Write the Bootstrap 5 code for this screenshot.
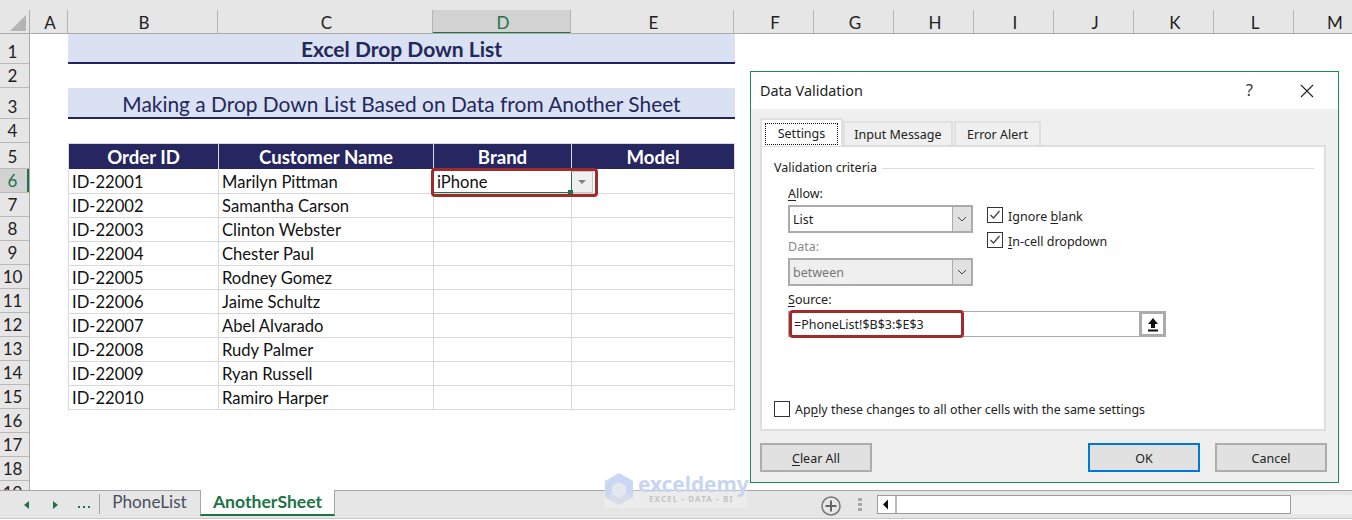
<!DOCTYPE html>
<html lang="en">
<head>
<meta charset="utf-8">
<title>Data Validation</title>
<link href="https://cdn.jsdelivr.net/npm/bootstrap@5.3.0/dist/css/bootstrap.min.css" rel="stylesheet">
<style>
html,body{margin:0;height:520px;overflow:hidden;background:#fff}
body{font-family:"Lato","Liberation Sans",sans-serif;color:#111}
.xl-app{width:1352px;height:520px;position:relative;overflow:hidden}
.xl-strip{height:10px;background:#e6e6e6}
.xl-colhead{height:24px;background:#e6e6e6;border-bottom:1px solid #ababab;width:1352px;overflow:hidden}
.xl-corner{width:30px;flex:none;border-right:1px solid #ababab;position:relative}
.xl-corner svg{display:block;margin:5px 0 0 10px}
.xl-col{font-size:17px;line-height:25px;text-align:center;border-right:1px solid #b4b4b4;color:#222;flex:none;height:23px;padding-left:3px}
.xl-col-sel{background:#d2d2d2;color:#217346;border-bottom:2px solid #217346;height:24px}
.xl-main{height:456px;overflow:hidden}
.xl-rows{width:30px;flex:none;background:#e6e6e6;border-right:1px solid #ababab}
.xl-row{font-size:17px;line-height:22px;text-align:center;border-bottom:1px solid #b9b9b9;color:#222;display:flex;align-items:flex-end;justify-content:center;padding-right:4px}
.xl-row-sel{background:#d2d2d2;color:#217346;box-shadow:inset -2px 0 0 #217346}
.xl-cells{width:705px;padding-left:38px;flex:none}
.xl-band{background:#d9e1f2;border-bottom:2px solid #22255e;color:#24285b;text-align:center}
.xl-band-a{height:30px;font-size:21px;font-weight:700;line-height:30px;margin-bottom:24px}
.xl-band-b{height:31px;font-size:20.9px;line-height:32px;margin-bottom:24px}
.xl-table{width:666px;table-layout:fixed;border-collapse:collapse;margin:0;--bs-table-border-color:#d9d9d9}
.xl-table th,.xl-table td{padding:1px 3px 0;border:1px solid #d9d9d9;font-size:16.6px;height:24px;line-height:22px;color:#111;box-shadow:none;vertical-align:top}
.xl-table thead th{background:#262660;color:#fff;font-weight:700;font-size:18.6px;text-align:center;height:26px;padding:1px 3px 0;line-height:24px;border-color:#d9d9d9;border-bottom-color:#fff}
.xl-bar{height:29px;background:#e6e6e6;border-top:1px solid #a6a6a6;border-bottom:1px solid #c8c8c8;position:relative}
.xl-nav{width:100px;flex:none;border-right:1px solid #a6a6a6;height:20px;margin-top:3px;color:#217346;position:relative}
.xl-tab{font-size:17.2px;height:26px;line-height:22px;color:#4a5060;flex:none}
.xl-tab-a{width:99px;text-align:center}
.xl-tab-b{width:135px;margin-left:1px;text-align:center;background:#fff;color:#217346;font-size:17.6px;font-weight:700;border-left:1px solid #a6a6a6;border-right:1px solid #a6a6a6;border-bottom:2px solid #217346;margin-top:-1px;height:26px;line-height:24px}
.xl-scroll{position:absolute;left:877px;top:4px;width:475px;height:19px;background:#f1f1f1}
.xl-scroll-in{width:414px;height:19px;background:#fff;border:1px solid #9b9b9b;flex:none}
.xl-scroll-btn{width:19px;border-right:2px solid #b9b9b9;height:17px}
.xl-plus{position:absolute;left:821px;top:5px}
.xl-dots{position:absolute;left:858px;top:7px;width:4px;height:14px}
.xl-dots i{display:block;width:4px;height:3px;background:#a6a6a6;margin-bottom:2px}
.xl-red{position:absolute;border:3px solid #a02b2b;border-radius:4px;pointer-events:none}
.xl-red-a{left:431px;top:168px;width:167px;height:29px}
.xl-dd{position:absolute;left:571px;top:171px;width:22px;height:22px;background:#f0f0f0;border:1px solid #c4c4c4;border-left:1px solid #217346}
.xl-dd svg{display:block;margin:8px 0 0 6px}
.xl-handle{position:absolute;left:568px;top:190px;width:5px;height:4px;background:#217346}
.xl-cellline{position:absolute;left:434px;top:192px;width:137px;height:1px;background:#217346}
.xl-dlg{position:absolute;left:750px;top:71px;width:589px;height:412px;border:1px solid #218b4f;background:#efefef;font-family:"Noto Sans","Open Sans",sans-serif;font-size:12.5px;color:#222}
.xl-dlg u{text-underline-offset:2px}
.xl-dlg-title{height:37px;background:#fff;font-size:14.4px;padding-left:9px;flex:none}
.xl-dlg-help{position:absolute;left:495px;top:8px;font-size:16px;line-height:20px;color:#333}
.xl-dlg-x{position:absolute;left:549px;top:12px}
.xl-tabs{margin:9px 0 0 9px;height:27px;border:0;flex:none}
.xl-t{height:24px;margin-top:3px;background:#efefef;border:2px solid #e0e0e0;border-bottom:0;line-height:23px;text-align:center;flex:none}
.xl-t-a{width:83px;height:28px;margin-top:0;background:#fff;padding:3px 3px 0;position:relative;z-index:1}
.xl-t-a span{display:block;border:1px dotted #111;height:22px;line-height:20px}
.xl-t-b{width:110px;margin-left:0}
.xl-t-c{width:87px;margin-left:1px}
.xl-panel{height:286px;margin:0 12px 0 9px;background:#fff;border:2px solid #dedede;padding:11px 10px 0 12px;flex:none;color:#222}
.xl-legend{height:20px;line-height:18px}
.xl-legend i{flex:1;height:1px;background:#dcdcdc;margin-left:5px}
.xl-lbl{line-height:20px;height:18px;margin-left:14px;margin-top:4px}
.xl-lbl-allow{margin-top:6px}
.xl-lbl-data{margin-left:0}
.xl-lbl-off{color:#8a8a8a}
.xl-crit{margin:3px 0 0 14px}
.xl-sel{width:185px;height:28px;border:2px solid #ababab;background:#fff;padding-left:3px;line-height:26px}
.xl-sel b{font-weight:400;flex:1}
.xl-sel span{width:19px;height:24px;background:#e1e1e1;border-left:1px solid #ababab;display:flex;align-items:center;justify-content:center}
.xl-sel-off{background:#efefef;color:#777;margin-top:3px}
.xl-check{width:16px;height:16px;border:1px solid #333;background:#fff;flex:none;display:block}
.xl-check svg{display:block}
.xl-checks{margin:2px 0 0 14px}
.xl-ck-row{height:16px;margin-bottom:9px}
.xl-ck-txt{margin-left:5px;padding-top:3px;line-height:18px}
.xl-apply .xl-ck-txt{padding-top:1px}
.xl-src{width:378px;height:26px;border:1px solid #ababab;background:#fff;padding-left:5px;line-height:26px;position:relative;margin:3px 0 0 14px}
.xl-src em{font-style:normal;flex:1}
.xl-upbtn{width:27px;height:26px;margin:-1px -1px 0 0;border:3px solid #ababab;background:#fff;display:flex;align-items:center;justify-content:center}
.xl-red-b{left:0;top:-2px;width:175px;height:28px}
.xl-apply{margin-top:64px;height:16px;font-size:12.4px}
.xl-btns{padding-left:9px;margin-top:12px}
.xl-btn{width:112px;height:29px;padding:0;background:#e1e1e1;border:2px solid #adadad;border-radius:0;font-size:12.5px;color:#222;line-height:27px}
.xl-btn-ok{border-color:#0078d7;margin-left:216px}
.xl-btn-cancel{margin-left:15px}
.xl-wm{position:absolute;left:604px;top:472px;width:144px;height:36px;pointer-events:none}
.xl-wm-bg{position:absolute;left:0;top:18px;width:143px;height:18px;background:rgba(255,255,255,.25)}
.xl-wm-t{position:absolute;left:34px;top:3px;font-size:20.8px;line-height:19px;font-weight:700;color:#c7d5f2;font-family:"Noto Sans",sans-serif}
.xl-wm-s{position:absolute;left:45px;top:22px;font-size:8px;line-height:9px;font-weight:700;letter-spacing:1.1px;color:#c4c4c4;font-family:"Noto Sans",sans-serif;white-space:nowrap}
.xl-wm svg{position:absolute;left:0;top:0}
</style>
</head>
<body>
<div class="xl-app">
  <div class="xl-strip"></div>
  <div class="xl-colhead d-flex">
    <div class="xl-corner"><svg width="17" height="16"><polygon points="0,16 16,16 16,0" fill="#b4b4b4"/></svg></div>
    <div class="xl-col" style="width:38px">A</div>
    <div class="xl-col" style="width:150px">B</div>
    <div class="xl-col" style="width:215px">C</div>
    <div class="xl-col xl-col-sel" style="width:138px">D</div>
    <div class="xl-col" style="width:163px">E</div>
    <div class="xl-col" style="width:80px">F</div>
    <div class="xl-col" style="width:80px">G</div>
    <div class="xl-col" style="width:80px">H</div>
    <div class="xl-col" style="width:80px">I</div>
    <div class="xl-col" style="width:80px">J</div>
    <div class="xl-col" style="width:80px">K</div>
    <div class="xl-col" style="width:80px">L</div>
    <div class="xl-col" style="width:80px">M</div>
  </div>
  <div class="xl-main d-flex">
    <div class="xl-rows">
      <div class="xl-row" style="height:30px">1</div>
      <div class="xl-row" style="height:24px">2</div>
      <div class="xl-row" style="height:31px">3</div>
      <div class="xl-row" style="height:24px">4</div>
      <div class="xl-row" style="height:26px">5</div>
      <div class="xl-row xl-row-sel" style="height:24px">6</div>
      <div class="xl-row" style="height:24px">7</div>
      <div class="xl-row" style="height:24px">8</div>
      <div class="xl-row" style="height:24px">9</div>
      <div class="xl-row" style="height:24px">10</div>
      <div class="xl-row" style="height:24px">11</div>
      <div class="xl-row" style="height:24px">12</div>
      <div class="xl-row" style="height:24px">13</div>
      <div class="xl-row" style="height:24px">14</div>
      <div class="xl-row" style="height:24px">15</div>
      <div class="xl-row" style="height:24px">16</div>
      <div class="xl-row" style="height:24px">17</div>
      <div class="xl-row" style="height:24px">18</div>
      <div class="xl-row" style="height:24px">19</div>
    </div>
    <div class="xl-cells">
      <div class="xl-band xl-band-a">Excel Drop Down List</div>
      <div class="xl-band xl-band-b">Making a Drop Down List Based on Data from Another Sheet</div>
      <table class="table xl-table">
        <colgroup><col style="width:150px"><col style="width:215px"><col style="width:138px"><col style="width:163px"></colgroup>
        <thead><tr><th>Order ID</th><th>Customer Name</th><th>Brand</th><th>Model</th></tr></thead>
        <tbody>
          <tr><td>ID-22001</td><td>Marilyn Pittman</td><td>iPhone</td><td></td></tr>
          <tr><td>ID-22002</td><td>Samantha Carson</td><td></td><td></td></tr>
          <tr><td>ID-22003</td><td>Clinton Webster</td><td></td><td></td></tr>
          <tr><td>ID-22004</td><td>Chester Paul</td><td></td><td></td></tr>
          <tr><td>ID-22005</td><td>Rodney Gomez</td><td></td><td></td></tr>
          <tr><td>ID-22006</td><td>Jaime Schultz</td><td></td><td></td></tr>
          <tr><td>ID-22007</td><td>Abel Alvarado</td><td></td><td></td></tr>
          <tr><td>ID-22008</td><td>Rudy Palmer</td><td></td><td></td></tr>
          <tr><td>ID-22009</td><td>Ryan Russell</td><td></td><td></td></tr>
          <tr><td>ID-22010</td><td>Ramiro Harper</td><td></td><td></td></tr>
        </tbody>
      </table>
    </div>
  </div>
  <div class="xl-bar d-flex">
    <div class="xl-nav">
      <svg width="100" height="20" class="d-block"><polygon points="24,11 29,7 29,15" fill="#217346"/><polygon points="53,7 53,15 58,11" fill="#217346"/><g fill="#217346"><rect x="78" y="12" width="2" height="2"/><rect x="83" y="12" width="2" height="2"/><rect x="88" y="12" width="2" height="2"/></g></svg>
    </div>
    <div class="xl-tab xl-tab-a">PhoneList</div>
    <div class="xl-tab xl-tab-b">AnotherSheet</div>
    <svg class="xl-plus" width="20" height="20"><circle cx="10" cy="10" r="9" fill="none" stroke="#777" stroke-width="1.5"/><path d="M10 4.5v11M4.5 10h11" stroke="#666" stroke-width="2"/></svg>
    <div class="xl-dots"><i></i><i></i><i></i></div>
    <div class="xl-scroll d-flex">
      <div class="xl-scroll-in d-flex"><div class="xl-scroll-btn"><svg width="17" height="17" class="d-block"><polygon points="5,8.5 10,3.5 10,13.5" fill="#111"/></svg></div></div>
    </div>
  </div>

  <span class="xl-cellline"></span>
  <div class="xl-dd"><svg width="8" height="4"><polygon points="0,0 8,0 4,4" fill="#808080"/></svg></div>
  <span class="xl-handle"></span>
  <div class="xl-red xl-red-a"></div>

  <div class="xl-wm">
    <div class="xl-wm-bg"></div>
    <svg width="30" height="34"><polygon points="15,1 29,9 29,25 15,33 1,25 1,9" fill="#c9d7f3"/><polygon points="1,25 15,17 29,25 15,33" fill="#d6dde8"/><polygon points="15,10 22,14 22,22 15,26 8,22 8,14" fill="#e4e8ef"/></svg>
    <div class="xl-wm-t">exceldemy</div>
    <div class="xl-wm-s">EXCEL - DATA - BI</div>
  </div>

  <div class="xl-dlg d-flex flex-column">
    <div class="xl-dlg-title d-flex align-items-center">Data Validation</div>
    <div class="xl-dlg-help">?</div>
    <svg class="xl-dlg-x" width="14" height="14"><path d="M1 1l12 12M13 1L1 13" stroke="#222" stroke-width="1.1" fill="none"/></svg>
    <div class="nav xl-tabs">
      <div class="xl-t xl-t-a"><span>Settings</span></div>
      <div class="xl-t xl-t-b">Input Message</div>
      <div class="xl-t xl-t-c">Error Alert</div>
    </div>
    <div class="xl-panel d-flex flex-column">
      <div class="xl-legend d-flex align-items-center">Validation criteria<i></i></div>
      <div class="xl-lbl xl-lbl-allow"><u>A</u>llow:</div>
      <div class="d-flex xl-crit">
        <div>
          <div class="xl-sel d-flex"><b>List</b><span><svg width="10" height="6"><path d="M1 1l4 4 4-4" stroke="#444" fill="none"/></svg></span></div>
          <div class="xl-lbl xl-lbl-off xl-lbl-data">Data:</div>
          <div class="xl-sel xl-sel-off d-flex"><b>between</b><span><svg width="10" height="6"><path d="M1 1l4 4 4-4" stroke="#444" fill="none"/></svg></span></div>
        </div>
        <div class="xl-checks">
          <div class="d-flex align-items-center xl-ck-row"><span class="xl-check"><svg width="14" height="14"><path d="M2.5 7l3 3 6-7" stroke="#444" stroke-width="1.3" fill="none"/></svg></span><span class="xl-ck-txt">Ignore <u>b</u>lank</span></div>
          <div class="d-flex align-items-center xl-ck-row"><span class="xl-check"><svg width="14" height="14"><path d="M2.5 7l3 3 6-7" stroke="#444" stroke-width="1.3" fill="none"/></svg></span><span class="xl-ck-txt"><u>I</u>n-cell dropdown</span></div>
        </div>
      </div>
      <div class="xl-lbl"><u>S</u>ource:</div>
      <div class="xl-src d-flex">
        <em>=PhoneList!$B$3:$E$3</em>
        <span class="xl-upbtn"><svg width="12" height="15"><path d="M6 1L1 7h3v4h4V7h3z" fill="#111"/><rect x="1" y="12.5" width="10" height="2" fill="#111"/></svg></span>
        <div class="xl-red xl-red-b"></div>
      </div>
      <div class="d-flex align-items-center xl-apply"><span class="xl-check"></span><span class="xl-ck-txt">Ap<u>p</u>ly these changes to all other cells with the same settings</span></div>
    </div>
    <div class="d-flex xl-btns">
      <button type="button" class="btn xl-btn"><u>C</u>lear All</button>
      <button type="button" class="btn xl-btn xl-btn-ok">OK</button>
      <button type="button" class="btn xl-btn xl-btn-cancel">Cancel</button>
    </div>
  </div>
</div>
</body>
</html>
